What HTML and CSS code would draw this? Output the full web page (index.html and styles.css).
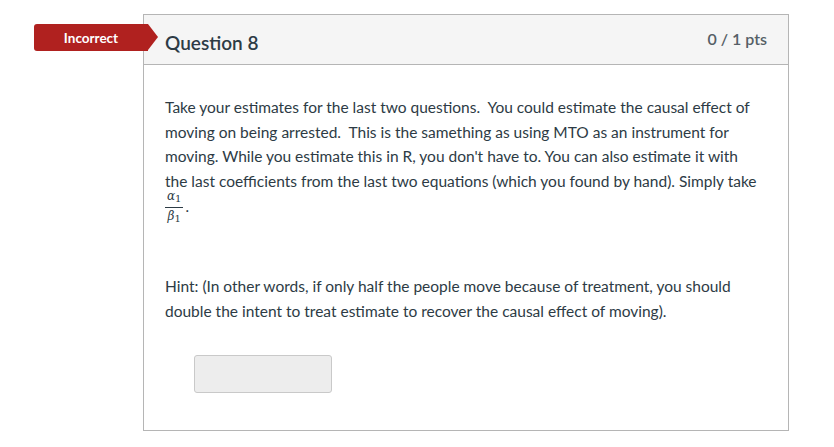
FILE: index.html
```html
<!DOCTYPE html>
<html>
<head>
<meta charset="utf-8">
<link rel="stylesheet" href="styles.css">
</head>
<body>
<div class="page">
  <div class="question">
    <div class="badge">Incorrect</div>
    <div class="header">
      <span class="title">Question 8</span>
      <span class="pts">0 / 1 pts</span>
    </div>
    <div class="content">
      <p class="text">Take your estimates for the last two questions.&nbsp; You could estimate the causal effect of moving on being arrested.&nbsp; This is the samething as using MTO as an instrument for moving. While you estimate this in R, you don't have to. You can also estimate it with the last coefficients from the last two equations (which you found by hand). Simply take <span class="frac-line"><span class="frac"><span class="num">α<sub>1</sub></span><span class="den">β<sub>1</sub></span></span><span class="dot">.</span></span></p>
      <p class="text hint">Hint: (In other words, if only half the people move because of treatment, you should double the intent to treat estimate to recover the causal effect of moving).</p>
      <div class="answer"><span class="input"></span></div>
    </div>
  </div>
</div>
</body>
</html>
```
FILE: styles.css
```css
html, body {
  margin: 0;
  padding: 0;
  background: #fff;
}
body {
  font-family: Lato, "Liberation Sans", sans-serif;
  color: #2d3b45;
}
.page {
  padding: 14px 0 0 143px;
}
.question {
  position: relative;
  width: 644px;
  height: 415px;
  border: 1px solid #b5b5b5;
  box-sizing: content-box;
}
.badge {
  position: absolute;
  left: -110px;
  top: 9px;
  width: 114px;
  height: 27px;
  background: #b0211f;
  color: #fff;
  font-weight: 700;
  font-size: 13.5px;
  line-height: 28px;
  box-sizing: border-box;
  border-radius: 3px 0 0 3px;
  text-align: center;
}
.badge::after {
  content: "";
  position: absolute;
  right: -10px;
  top: 0;
  border-top: 13.5px solid transparent;
  border-bottom: 13.5px solid transparent;
  border-left: 10px solid #b0211f;
}
.header {
  display: flex;
  justify-content: space-between;
  align-items: center;
  height: 49px;
  background: #f5f5f5;
  border-bottom: 1px solid #b5b5b5;
  padding: 0 21px 0 21px;
  box-sizing: content-box;
}
.title {
  font-size: 19px;
  font-weight: 600;
  padding-top: 6px;
}
.pts {
  font-size: 16px;
  font-weight: 600;
  color: #555f66;
  padding-bottom: 3px;
}
.content {
  padding: 30px 28px 0 21px;
}
.text {
  margin: 0;
  font-size: 15.5px;
  line-height: 24.6px;
}
.frac-line {
  display: block;
  line-height: 20px;
  margin-top: -4px;
}
.frac {
  display: inline-flex;
  flex-direction: column;
  align-items: center;
  vertical-align: middle;
  font-family: "DejaVu Serif", "Liberation Serif", serif;
  font-style: italic;
  font-size: 12px;
}
.frac sub {
  font-style: normal;
  font-size: 10px;
  vertical-align: -2px;
}
.num {
  border-bottom: 1px solid #2d3b45;
  padding: 0 2px 1px;
  line-height: 14px;
}
.den {
  line-height: 15px;
  padding-top: 1px;
}
.dot {
  font-size: 15px;
  margin-left: 2px;
}
.hint {
  margin-top: 48px;
}
.answer {
  padding: 31px 0 0 29px;
}
.input {
  display: block;
  width: 136px;
  height: 36px;
  background: #ededed;
  border: 1px solid #c9c9c9;
  border-radius: 3px;
}
```
